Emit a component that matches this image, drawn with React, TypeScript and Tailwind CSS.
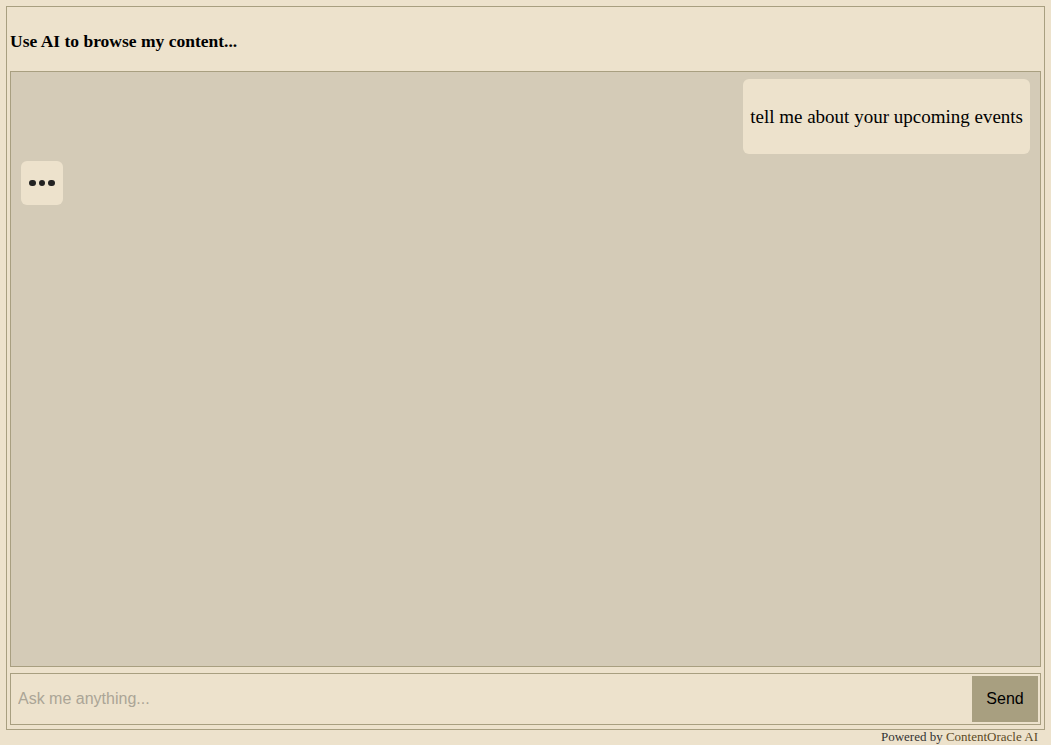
import React from 'react';

const serif = { fontFamily: '"Liberation Serif", "DejaVu Serif", serif' };

const App: React.FC = () => {
  return (
    <div className="min-h-screen bg-[#ede2cc] pt-[6px] px-[6px] text-black" style={serif}>
      <div className="border border-[#a89f80] px-[3px] pb-[4px]">
        {/* Header */}
        <div className="h-[64px] flex items-center pt-[6px]">
          <h3 className="text-[17.5px] font-bold leading-none">Use AI to browse my content...</h3>
        </div>

        {/* Chat messages */}
        <div className="h-[596px] bg-[#d4cbb7] border border-[#a89f80] flex flex-col">
          <div className="flex justify-end pt-[7px] pr-[10px]">
            <div className="bg-[#ede2cc] rounded-[6px] px-[7px] h-[75px] flex items-center">
              <p className="text-[19px] pt-[2px]">tell me about your upcoming events</p>
            </div>
          </div>
          <div className="flex pt-[7px] pl-[10px]">
            <div className="bg-[#ede2cc] rounded-[6px] w-[42px] h-[44px] flex items-center justify-center gap-[3px]">
              <span className="w-[6.5px] h-[6.5px] rounded-full bg-[#222]" />
              <span className="w-[6.5px] h-[6.5px] rounded-full bg-[#222]" />
              <span className="w-[6.5px] h-[6.5px] rounded-full bg-[#222]" />
            </div>
          </div>
        </div>

        {/* Input row */}
        <div className="mt-[6px] h-[52px] border border-[#a89f80] flex p-[2px]">
          <input
            className="flex-1 bg-transparent outline-none px-[5px] text-[16px] text-black placeholder:text-[#aba596]"
            style={{ fontFamily: '"Liberation Sans", Arial, sans-serif' }}
            placeholder="Ask me anything..."
          />
          <button
            className="w-[66px] bg-[#a89f80] text-black text-[16px]"
            style={{ fontFamily: '"Liberation Sans", Arial, sans-serif' }}
          >
            Send
          </button>
        </div>
      </div>

      {/* Footer */}
      <div className="text-right text-[13px] leading-[14px] pr-[7px] text-[#333]">
        Powered by <span className="text-[#5c4a26]">ContentOracle AI</span>
      </div>
    </div>
  );
};

export default App;
